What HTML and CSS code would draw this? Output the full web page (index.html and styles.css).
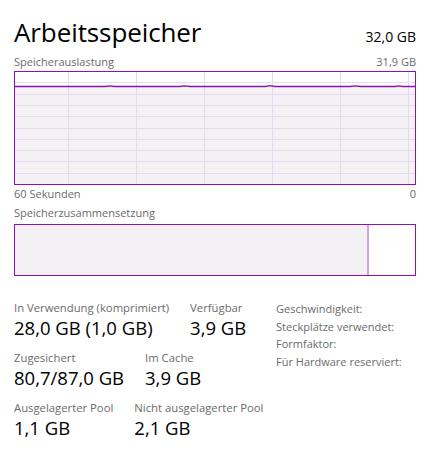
FILE: index.html
```html
<!DOCTYPE html>
<html lang="de">
<head>
<meta charset="utf-8">
<link rel="stylesheet" href="styles.css">
</head>
<body>
<div class="page">
  <div class="header">
    <h1 class="title">Arbeitsspeicher</h1>
    <div class="total">32,0 GB</div>
  </div>
  <div class="label-row">
    <span>Speicherauslastung</span>
    <span>31,9 GB</span>
  </div>
  <div class="graph">
    <svg width="400" height="112" viewBox="0 0 400 112">
      <rect x="0" y="14.5" width="400" height="98" fill="#f3f1f4"/>
      <g stroke="#ead8f0" stroke-width="1">
        <line x1="53.5" y1="0" x2="53.5" y2="112"/>
        <line x1="121.5" y1="0" x2="121.5" y2="112"/>
        <line x1="189.5" y1="0" x2="189.5" y2="112"/>
        <line x1="257.5" y1="0" x2="257.5" y2="112"/>
        <line x1="325.5" y1="0" x2="325.5" y2="112"/>
        <line x1="393.5" y1="0" x2="393.5" y2="112"/>
        <line x1="0" y1="10.5" x2="400" y2="10.5"/>
        <line x1="0" y1="22.5" x2="400" y2="22.5"/>
        <line x1="0" y1="33.5" x2="400" y2="33.5"/>
        <line x1="0" y1="44.5" x2="400" y2="44.5"/>
        <line x1="0" y1="56.5" x2="400" y2="56.5"/>
        <line x1="0" y1="67.5" x2="400" y2="67.5"/>
        <line x1="0" y1="78.5" x2="400" y2="78.5"/>
        <line x1="0" y1="89.5" x2="400" y2="89.5"/>
        <line x1="0" y1="101.5" x2="400" y2="101.5"/>
      </g>
      <polyline fill="none" stroke="#8b12ae" stroke-width="1.3" points="0,14.5 90,14.5 95,13.8 100,14.5 165,14.5 170,13.8 175,14.5 250,14.5 255,13.6 260,14.5 335,14.5 340,13.8 346,14.5 380,14.5 384,13.8 388,14.5 400,14.5"/>
    </svg>
  </div>
  <div class="label-row axis">
    <span>60 Sekunden</span>
    <span>0</span>
  </div>
  <div class="label-row section">
    <span>Speicherzusammensetzung</span>
  </div>
  <div class="composition">
    <div class="used"></div>
    <div class="free"></div>
  </div>
  <div class="stats">
    <div class="stat-rows">
      <div class="stat-row">
        <div class="stat"><div class="stat-label">In Verwendung (komprimiert)</div><div class="stat-value">28,0 GB (1,0 GB)</div></div>
        <div class="stat"><div class="stat-label">Verfügbar</div><div class="stat-value">3,9 GB</div></div>
      </div>
      <div class="stat-row">
        <div class="stat"><div class="stat-label">Zugesichert</div><div class="stat-value">80,7/87,0 GB</div></div>
        <div class="stat"><div class="stat-label">Im Cache</div><div class="stat-value">3,9 GB</div></div>
      </div>
      <div class="stat-row">
        <div class="stat"><div class="stat-label">Ausgelagerter Pool</div><div class="stat-value">1,1 GB</div></div>
        <div class="stat"><div class="stat-label">Nicht ausgelagerter Pool</div><div class="stat-value">2,1 GB</div></div>
      </div>
    </div>
    <div class="details">
      <div>Geschwindigkeit:</div>
      <div>Steckplätze verwendet:</div>
      <div>Formfaktor:</div>
      <div>Für Hardware reserviert:</div>
    </div>
  </div>
</div>
</body>
</html>
```
FILE: styles.css
```css
html, body {
  margin: 0;
  padding: 0;
  background: #ffffff;
}
body {
  font-family: "Open Sans", "Noto Sans", sans-serif;
  color: #000000;
}
.page {
  width: 402px;
  padding: 14px 20px 0 14px;
}
.header {
  display: flex;
  justify-content: space-between;
  align-items: baseline;
  height: 40px;
}
.title {
  margin: 0;
  font-weight: 400;
  font-size: 26px;
  line-height: 36px;
  letter-spacing: -0.1px;
}
.total {
  font-size: 14px;
}
.label-row {
  display: flex;
  justify-content: space-between;
  font-size: 11px;
  line-height: 16px;
  color: #6b6b6b;
  height: 17px;
}
.graph {
  width: 400px;
  height: 112px;
  border: 1px solid #8b12ae;
}
.graph svg {
  display: block;
}
.axis {
  margin-top: 1px;
}
.section {
  margin-top: 2px;
  height: 19px;
}
.composition {
  display: flex;
  width: 400px;
  height: 50px;
  border: 1px solid #8b12ae;
}
.used {
  width: 352px;
  background: #f3f1f4;
  border-right: 2px solid #cba8da;
}
.free {
  flex: 1;
  background: #ffffff;
}
.stats {
  display: flex;
  margin-top: 24px;
}
.stat-rows {
  width: 262px;
  display: flex;
  flex-direction: column;
  gap: 10px;
}
.stat-row {
  display: flex;
  gap: 21px;
}
.stat-label {
  font-size: 11.3px;
  line-height: 16px;
  color: #6b6b6b;
}
.stat-value {
  font-size: 18.5px;
  line-height: 24px;
}
.details {
  display: flex;
  flex-direction: column;
  font-size: 11px;
  line-height: 17.5px;
  color: #6b6b6b;
}
```
